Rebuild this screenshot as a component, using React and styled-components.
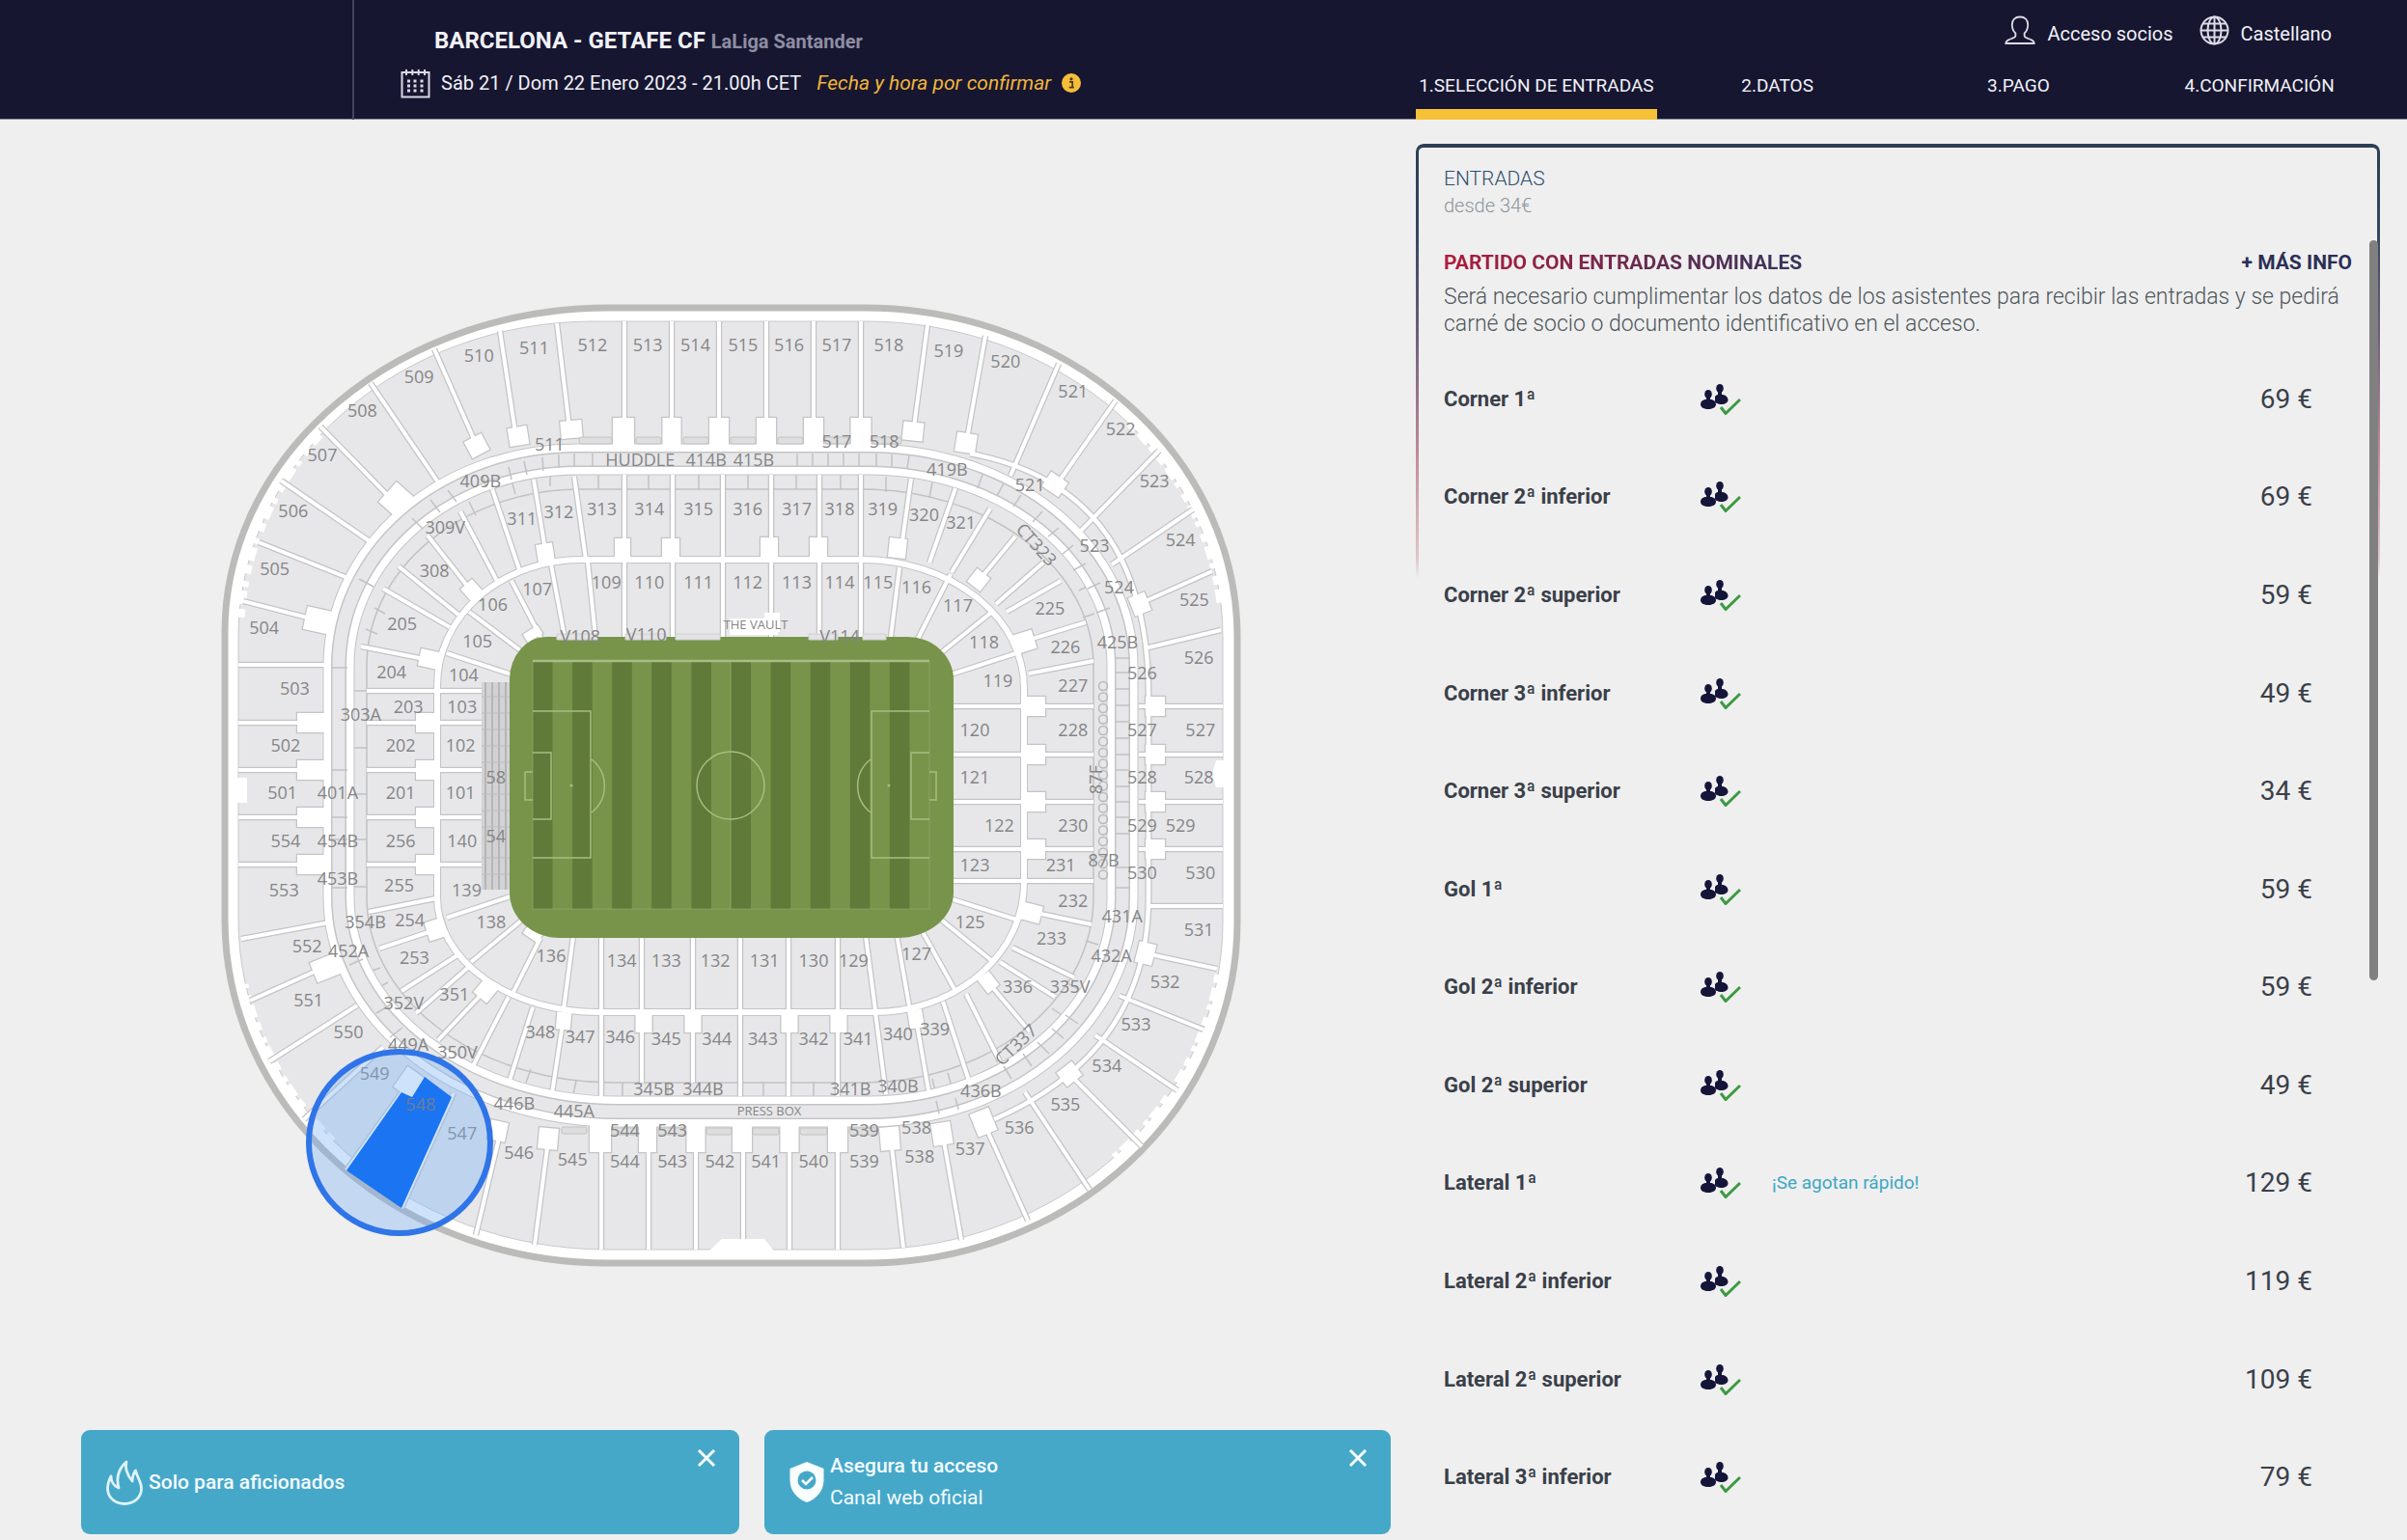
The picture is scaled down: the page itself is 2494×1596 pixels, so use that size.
import React from 'react';
import styled, { createGlobalStyle, css } from 'styled-components';

const GlobalStyle = createGlobalStyle`
  *, *::before, *::after { box-sizing: border-box; }
  body { margin: 0; background: #efefef; }
  button { font: inherit; color: inherit; border: 0; padding: 0; background: none; cursor: pointer; }
  a { color: inherit; text-decoration: none; }
  h1, h2, p, ul, ol { margin: 0; padding: 0; font-weight: inherit; }
  ul, ol { list-style: none; }
`;

const columns = css`
  display: grid;
  grid-template-columns: minmax(0, 1467fr) minmax(0, 1027fr);
`;

const Page = styled.div`
  height: 100vh;
  display: flex;
  flex-direction: column;
  overflow: hidden;
  font-family: Roboto, "Liberation Sans", sans-serif;
  font-size: 20px;
  line-height: 24px;
  color: #3a4049;
`;

const Header = styled.header`
  ${columns}
  flex: none;
  color: #f1f1f6;
  background: #161631;
  box-shadow: inset 0 -1px #8b8b99;
`;

const MatchSide = styled.div`
  display: flex;
`;

const BrandSlot = styled.div`
  width: 367px;
  border-right: 2px solid #43435e;
`;

const Match = styled.div`
  display: flex;
  flex-direction: column;
  gap: 13px;
  padding: 27px 0 0 48px;
`;

const MatchTitle = styled.h1`
  padding-left: 35px;
  font-size: 24px;
  line-height: 30px;
  font-weight: 700;
`;

const League = styled.span`
  font-size: 20px;
  color: #8e8ea1;
`;

const MatchDate = styled.div`
  display: flex;
  align-items: center;
  height: 30px;
  gap: 11px;
`;

const Pending = styled.em`
  margin-left: 5px;
  font-size: 21px;
  color: #f2b53a;
`;

const HeaderSide = styled.div`
  display: flex;
  flex-direction: column;
  gap: 30px;
  padding-top: 17px;
`;

const UserMenu = styled.div`
  display: flex;
  justify-content: flex-end;
  align-items: flex-end;
  gap: 27px;
  height: 30px;
  padding-right: 78px;
`;

const MenuItem = styled.button`
  display: flex;
  align-items: flex-end;
  gap: 12px;
`;

const Steps = styled.ol`
  display: grid;
  grid-template-columns: repeat(4, 1fr);
  padding-right: 28px;
`;

const Step = styled.a`
  display: block;
  padding-bottom: 12px;
  font-size: 19px;
  text-align: center;
  white-space: nowrap;
  border-bottom: 11px solid ${(p) => (p['aria-current'] ? '#f7c137' : 'transparent')};
`;

const Main = styled.main`
  ${columns}
  flex: 1;
  min-height: 0;
`;

const MapSide = styled.section`
  display: flex;
  flex-direction: column;
  min-height: 0;
  padding-bottom: 6px;
`;

const Plan = styled.svg`
  display: block;
  flex: 1;
  min-height: 0;
  width: 100%;
`;

const Notices = styled.div`
  display: grid;
  grid-template-columns: 682fr 649fr;
  gap: 26px;
  padding: 0 26px 0 84px;
`;

const Notice = styled.div`
  display: flex;
  align-items: center;
  height: 108px;
  padding: 0 24px 0 26px;
  gap: 6px;
  font-size: 21px;
  color: #f4fbff;
  background: #46a8c9;
  border-radius: 9px;
`;

const NoticeText = styled.div`
  flex: 1;
  line-height: 33px;
`;

const NoticeTitle = styled.p`
  font-weight: 500;
`;

const Close = styled.button`
  align-self: flex-start;
  display: flex;
  margin-top: 19px;
`;

const TicketSide = styled.section`
  display: flex;
  min-height: 0;
  padding: 25px 28px 14px 0;
`;

const Card = styled.div`
  position: relative;
  flex: 1;
  display: flex;
  flex-direction: column;
  padding: 22px 29px 0 29px;

  &::before {
    content: "";
    position: absolute;
    inset: 0 0 auto 0;
    height: 450px;
    padding: 4px 3px 0 3px;
    border-radius: 8px 8px 0 0;
    background: linear-gradient(#2d3e55 0, #34465f 90px, #6f5f7c 200px, #c08a97 320px, rgba(205, 160, 165, 0.5) 430px, transparent);
    mask: linear-gradient(#000 0 0) content-box exclude, linear-gradient(#000 0 0);
    pointer-events: none;
  }
`;

const Scrollbar = styled.div`
  position: absolute;
  top: 100px;
  right: 2px;
  width: 9px;
  height: 767px;
  border-radius: 5px;
  background: #808080;
`;

const CardTitle = styled.h2`
  font-size: 21px;
  line-height: 28px;
  font-weight: 300;
  color: #2f4d6e;
`;

const From = styled.p`
  line-height: 28px;
  font-weight: 300;
  color: #8d959b;
`;

const NominalHead = styled.div`
  display: flex;
  justify-content: space-between;
  align-items: center;
  margin-top: 31px;
  font-size: 21px;
  line-height: 28px;
  font-weight: 700;
`;

const NominalTitle = styled.span`
  color: transparent;
  background: linear-gradient(90deg, #b01c3d, #34345c);
  background-clip: text;
`;

const More = styled.button`
  color: #2c2f55;
`;

const Explain = styled.p`
  margin-top: 8px;
  font-size: 23px;
  line-height: 28px;
  font-weight: 300;
  color: #50575c;
`;

const Zones = styled.ul`
  flex: 1;
  min-height: 0;
  display: grid;
  grid-auto-rows: 1fr;
  margin-top: 13px;
  padding-right: 41px;
`;

const Zone = styled.button`
  display: grid;
  grid-template-columns: 266px 74px 1fr auto;
  align-items: center;
  width: 100%;
  height: 100%;
  text-align: left;
`;

const ZoneName = styled.span`
  font-size: 22px;
  font-weight: 700;
`;

const Alert = styled.span`
  font-size: 19px;
  color: #3da7c3;
`;

const Price = styled.span`
  font-size: 28px;
  line-height: 32px;
`;

/* ---------- icons ---------- */

const CalendarIcon = () => (
  <svg width="31" height="31" viewBox="0 0 31 31" fill="none" stroke="#d9d9e6" strokeWidth="2" aria-hidden="true">
    <rect x="1.5" y="4" width="28" height="25.5" />
    <path d="M6 1v6M12.300 1v6M18.700 1v6M25 1v6" />
    <g fill="#d9d9e6" stroke="none">
      {[13, 18, 23].map((y) => [7, 13.5, 20.500].map((x) => <rect key={`${x}-${y}`} x={x} y={y - 1.500} width="3" height="3" />))}
    </g>
  </svg>
);

const InfoIcon = () => (
  <svg width="20" height="20" viewBox="0 0 20 20" aria-hidden="true">
    <circle cx="10" cy="10" r="10" fill="#f5bd38" />
    <circle cx="10" cy="5.800" r="1.600" fill="#4a3a20" />
    <path d="M8 8.800h3.200v5.200M7.800 14.600h5" stroke="#4a3a20" strokeWidth="1.800" fill="none" />
  </svg>
);

const UserIcon = () => (
  <svg width="32" height="31" viewBox="0 0 32 31" fill="none" stroke="#dcdce8" strokeWidth="1.800" strokeLinejoin="round" aria-hidden="true">
    <path d="M16 1.500c5 0 8.200 3 8.200 8 0 4.500-1.400 7-3.600 9v2.500c0 1.500 1 1.900 3.200 2.700 4 1.400 6.700 2.300 7 5.300H1.200c.3-3 3-3.900 7-5.300 2.200-.8 3.200-1.200 3.200-2.700v-2.500c-2.200-2-3.600-4.500-3.600-9 0-5 3.200-8 8.200-8z" />
  </svg>
);

const GlobeIcon = () => (
  <svg width="31" height="31" viewBox="0 0 31 31" fill="none" stroke="#dcdce8" strokeWidth="2" aria-hidden="true">
    <circle cx="15.500" cy="15.500" r="14" />
    <ellipse cx="15.500" cy="15.500" rx="7" ry="14" />
    <path d="M15.500 1.500v28M1.500 15.500h28M4 8.500h23M4 22.500h23" />
  </svg>
);

const PeopleIcon = () => (
  <svg width="42" height="32" viewBox="0 0 42 32" aria-hidden="true">
    <g fill="#15153a">
      <ellipse cx="20" cy="4.500" rx="3.800" ry="4.500" />
      <path d="M18 8h4v3c4 0 6.500 2.500 6.500 5.500 0 2.500-3 4.500-7 4.500-3 0-5.500-1-6.500-2.500V13c.8-1.300 2-2 3-2z" />
      <ellipse cx="8" cy="10.500" rx="3.800" ry="4.500" />
      <path d="M6 14h4v2c4 0 6 2.500 6 5s-2.500 5-8 5-8-2.500-8-5 2-5 6-5z" />
    </g>
    <path d="M21 24l5 6.500L41 16" fill="none" stroke="#3c9a41" strokeWidth="3" />
  </svg>
);

const FlameIcon = () => (
  <svg width="38" height="47" viewBox="0 0 38 47" fill="none" stroke="#dff3fa" strokeWidth="2.800" strokeLinejoin="round" aria-hidden="true">
    <path d="M21 2C13 9 10 18 13 29 8 27 5 22 5 17c-2 4-3.500 8-3.500 12.500C1.500 39 9 45.500 19 45.500S36.500 39 36.500 29.500C36.500 23 32 18 30.500 11c-2 2-3 6-3.500 11-4-5-8-12-6-20z" />
  </svg>
);

const ShieldIcon = () => (
  <svg width="36" height="42" viewBox="0 0 36 42" aria-hidden="true">
    <path d="M18 0l17.500 7v12c0 11-7.500 19.500-17.500 23C8 38.500.5 30 .5 19V7z" fill="#f9feff" />
    <circle cx="18" cy="19" r="9.500" fill="#46a8c9" />
    <path d="M13 19l4 4 7-7" fill="none" stroke="#f9feff" strokeWidth="2.500" />
  </svg>
);

const CloseIcon = () => (
  <svg width="20" height="20" viewBox="0 0 20 20" stroke="#f9feff" strokeWidth="3" aria-hidden="true">
    <path d="M2 2l16 16M18 2L2 18" />
  </svg>
);

/* ---------- stadium plan ---------- */

/* Closed ring: outer bounds plus the centre of each corner's ellipse. */
const ring = (l, t, r, b, tl, tr, br, bl) =>
  `M${tl[0]} ${t}H${tr[0]}A${r - tr[0]} ${tr[1] - t} 0 0 1 ${r} ${tr[1]}V${br[1]}` +
  `A${r - br[0]} ${b - br[1]} 0 0 1 ${br[0]} ${b}H${bl[0]}A${bl[0] - l} ${b - bl[1]} 0 0 1 ${l} ${bl[1]}` +
  `V${tl[1]}A${tl[0] - l} ${tl[1] - t} 0 0 1 ${tl[0]} ${t}Z`;

const RINGS = {
  wall: ring(233, 319, 1282, 1309, [631, 655], [895, 660], [897, 955], [629, 953]),
  stands: ring(247, 333, 1267, 1295, [615, 660], [897, 660], [897, 955], [629, 953]),
  upper: ring(351, 476, 1163, 1152, [598, 690], [900, 690], [900, 930], [640, 930]),
  boxes: ring(380, 507, 1133, 1122, [602, 690], [893, 690], [895, 930], [635, 930]),
  lower: ring(453, 580, 1061, 1049, [602, 710], [893, 713], [905, 915], [620, 930]),
  pitch: ring(528, 660, 988, 972, [566, 704], [940, 704], [930, 925], [580, 925]),
};

const UPPER_RIGHT_LANE = 'M1005 470Q1190 505 1190 720V930Q1190 1090 1030 1160';

const AISLES = [
  [647, 333, 647, 452], [696, 333, 696, 452], [745, 333, 745, 452], [794, 333, 794, 452], [843, 333, 843, 452], [892, 333, 892, 452],
  [577, 335, 591, 452], [518, 343, 535, 455], [450, 362, 494, 462], [384, 397, 454, 500], [332, 442, 410, 522], [291, 498, 386, 563],
  [268, 562, 363, 600], [252, 623, 330, 643], [247, 689, 341, 689], [247, 749, 341, 749], [247, 798, 341, 798], [247, 847, 341, 847],
  [247, 896, 341, 896], [250, 973, 341, 956], [259, 1037, 330, 1005], [279, 1100, 370, 1042], [315, 1160, 397, 1085], [359, 1213, 418, 1130],
  [416, 1252, 470, 1133], [493, 1280, 518, 1175], [554, 1290, 568, 1182], [623, 1295, 623, 1180], [672, 1295, 672, 1180],
  [721, 1295, 721, 1180], [770, 1295, 770, 1180], [818, 1295, 818, 1180], [868, 1295, 868, 1180], [936, 1293, 923, 1180],
  [996, 1285, 977, 1177], [1065, 1265, 1020, 1165], [1129, 1233, 1062, 1132], [1183, 1188, 1108, 1113], [1220, 1130, 1135, 1073],
  [1247, 1067, 1160, 1032], [1261, 1004, 1187, 988], [1267, 939, 1190, 939], [1267, 880, 1180, 880], [1267, 831, 1180, 831],
  [1267, 782, 1180, 782], [1267, 732, 1180, 732], [1265, 653, 1186, 672], [1256, 592, 1180, 626], [1236, 528, 1152, 585],
  [1201, 467, 1120, 550], [1156, 415, 1093, 505], [1097, 377, 1047, 493], [1021, 348, 1001, 460], [961, 337, 946, 450],
  [647, 492, 647, 660], [697, 492, 697, 660], [749, 492, 749, 660], [799, 492, 799, 660], [849, 492, 849, 660], [892, 492, 892, 660],
  [595, 494, 607, 580], [553, 497, 566, 576], [510, 507, 538, 590], [477, 530, 515, 602], [443, 555, 488, 612], [413, 587, 475, 637],
  [397, 610, 466, 650], [374, 670, 445, 684], [380, 716, 450, 716], [380, 749, 450, 749], [380, 798, 450, 798], [380, 847, 450, 847],
  [380, 896, 450, 896], [382, 945, 452, 931], [393, 983, 450, 964], [416, 1027, 474, 990], [431, 1050, 488, 1000], [454, 1078, 502, 1027],
  [490, 1105, 527, 1033], [527, 1123, 552, 1044], [572, 1133, 584, 1054], [623, 1136, 623, 972], [767, 1136, 767, 972],
  [817, 1136, 817, 972], [868, 1136, 868, 972], [665, 1122, 665, 972], [718, 1122, 718, 972], [907, 1049, 918, 1134], [949, 1055, 962, 1130],
  [977, 1038, 1004, 1120], [1001, 1030, 1036, 1100], [1024, 1018, 1067, 1069], [1036, 997, 1093, 1033], [1049, 982, 1113, 1013],
  [1069, 945, 1131, 958], [1061, 913, 1133, 913], [1061, 880, 1133, 880], [1061, 831, 1133, 831], [1061, 782, 1133, 782],
  [1061, 732, 1133, 732], [1066, 698, 1133, 685], [1063, 664, 1125, 645], [1043, 634, 1099, 602], [1032, 626, 1081, 583],
  [1014, 602, 1052, 556], [986, 593, 1026, 527], [963, 583, 990, 506], [933, 575, 944, 496],
  [932, 588, 923, 660], [985, 595, 951, 662], [1028, 634, 972, 679], [1053, 677, 985, 699], [988, 732, 1060, 732], [988, 782, 1060, 782],
  [988, 831, 1060, 831], [988, 880, 1060, 880], [988, 913, 1060, 913], [1053, 953, 984, 931], [1028, 996, 970, 949], [990, 1027, 955, 964],
  [942, 1042, 929, 968], [907, 1047, 897, 970], [594, 970, 584, 1046], [560, 972, 531, 1030], [545, 950, 488, 997], [532, 928, 463, 951],
  [453, 896, 499, 896], [453, 847, 499, 847], [453, 798, 499, 798], [453, 749, 499, 749], [453, 716, 499, 716],
  [530, 699, 463, 677], [547, 680, 486, 634], [561, 662, 530, 602], [585, 660, 571, 585], [617, 660, 609, 582],
];

/* Stair openings: centre x, centre y, width, height, rotation. */
const DOORS = [
  [646, 447, 22, 28, 0], [696, 447, 19, 28, 0], [745, 447, 20, 28, 0], [794, 447, 20, 28, 0], [843, 447, 20, 28, 0], [892, 447, 21, 28, 0],
  [592, 445, 22, 18, -5], [537, 452, 20, 19, -9], [494, 462, 20, 19, -28], [412, 519, 28, 28, 42], [330, 643, 28, 24, 12],
  [325, 749, 34, 20, 0], [325, 798, 34, 20, 0], [325, 847, 34, 20, 0], [325, 896, 34, 20, 0], [338, 1003, 28, 22, -22], [424, 1122, 22, 26, 35],
  [516, 1172, 18, 20, 12], [568, 1180, 20, 22, 5], [622, 1180, 22, 28, 0], [671, 1180, 18, 28, 0], [721, 1180, 19, 28, 0],
  [769, 1180, 20, 28, 0], [818, 1180, 19, 28, 0], [868, 1180, 20, 28, 0], [922, 1180, 20, 24, -5], [976, 1175, 20, 23, -9],
  [1019, 1163, 21, 25, -22], [1108, 1113, 20, 18, -38], [1187, 988, 18, 22, 14], [1197, 880, 20, 20, 0], [1197, 831, 20, 20, 0],
  [1197, 782, 20, 20, 0], [1197, 732, 20, 20, 0], [1181, 626, 18, 20, -22], [1093, 502, 21, 18, 34], [1001, 459, 21, 20, 9], [946, 447, 21, 19, 6],
  [645, 568, 16, 20, 0], [695, 568, 18, 20, 0], [797, 567, 18, 20, 0], [848, 567, 18, 20, 0], [565, 573, 17, 19, -9], [489, 612, 16, 18, -42],
  [445, 683, 21, 18, 12], [441, 749, 20, 20, 0], [441, 798, 20, 20, 0], [441, 847, 20, 20, 0], [441, 896, 20, 20, 0], [452, 963, 20, 20, -18],
  [503, 1027, 18, 18, 40], [584, 1058, 15, 18, 5], [667, 1060, 17, 20, 0], [718, 1060, 17, 20, 0], [818, 1060, 17, 20, 0], [869, 1060, 17, 20, 0],
  [949, 1056, 15, 19, -9], [1024, 1018, 15, 18, -38], [1069, 946, 20, 18, 14], [1073, 880, 20, 20, 0], [1073, 831, 20, 20, 0],
  [1073, 782, 20, 20, 0], [1073, 732, 20, 20, 0], [1062, 665, 20, 20, -18], [1014, 601, 17, 17, 38], [930, 568, 18, 20, 6],
  [552, 657, 18, 10, -32], [552, 968, 18, 10, 34],
];

/* Narrow seat rows beside the concourse: x, y, width. */
const ROWS = [
  [600, 453, 34], [659, 453, 26], [708, 453, 26], [757, 453, 26], [806, 453, 26], [855, 453, 26], [904, 453, 30],
  [634, 1169, 26], [682, 1169, 28], [732, 1169, 26], [780, 1169, 27], [829, 1169, 28], [880, 1169, 30],
  [582, 1168, 26],
];

/* Block labels sit on a 1568-unit wide chart: text, x, y, rotation. */
const UNIT = 2494 / 1568;
const LABELS = [
  ['510', 312, 232], ['511', 348, 227], ['512', 386, 225], ['513', 422, 225], ['514', 453, 225], ['515', 484, 225], ['516', 514, 225],
  ['517', 545, 225], ['518', 579, 225], ['519', 618, 229], ['520', 655, 236], ['521', 699, 255], ['522', 730, 280], ['523', 752, 314],
  ['524', 769, 352], ['525', 778, 391], ['526', 781, 429], ['527', 782, 476], ['528', 781, 507], ['529', 769, 538], ['530', 782, 569],
  ['531', 781, 606], ['532', 759, 640], ['533', 740, 668], ['534', 721, 695], ['535', 694, 720], ['536', 664, 735], ['537', 632, 749],
  ['538', 599, 754], ['539', 563, 757], ['540', 530, 757], ['541', 499, 757], ['542', 469, 757], ['543', 438, 757], ['544', 407, 757],
  ['545', 373, 756], ['546', 338, 751], ['547', 301, 739], ['549', 244, 700], ['550', 227, 673], ['551', 201, 652], ['552', 200, 617],
  ['553', 185, 580], ['554', 186, 548], ['501', 184, 517], ['502', 186, 486], ['503', 192, 449], ['504', 172, 409], ['505', 179, 371],
  ['506', 191, 333], ['507', 210, 297], ['508', 236, 268], ['509', 273, 246],
  ['511', 358, 290], ['517', 545, 288], ['518', 576, 288], ['521', 671, 316], ['523', 713, 356], ['524', 729, 383], ['526', 744, 439],
  ['527', 744, 476], ['528', 744, 507], ['529', 744, 538], ['530', 744, 569], ['538', 597, 735], ['539', 563, 737], ['543', 438, 737], ['544', 407, 737],
  ['HUDDLE', 417, 300], ['414B', 460, 300], ['415B', 491, 300], ['419B', 617, 306], ['409B', 313, 314], ['309V', 290, 344],
  ['425B', 728, 419], ['431A', 731, 597], ['432A', 724, 623], ['436B', 639, 711], ['446B', 335, 719], ['445A', 374, 724],
  ['449A', 266, 681], ['350V', 298, 686], ['352V', 263, 654], ['452A', 227, 620], ['354B', 238, 601], ['453B', 220, 573], ['454B', 220, 548],
  ['401A', 220, 517], ['303A', 235, 466], ['340B', 585, 708], ['341B', 554, 710], ['344B', 458, 710], ['345B', 426, 710], ['335V', 697, 643],
  ['87B', 719, 561],
  ['311', 340, 338], ['312', 364, 334], ['313', 392, 332], ['314', 423, 332], ['315', 455, 332], ['316', 487, 332], ['317', 519, 332],
  ['318', 547, 332], ['319', 575, 332], ['320', 602, 336], ['321', 626, 341], ['308', 283, 372],
  ['109', 395, 380], ['110', 423, 380], ['111', 455, 380], ['112', 487, 380], ['113', 519, 380], ['114', 547, 380], ['115', 572, 380],
  ['116', 597, 383], ['117', 624, 395], ['118', 641, 419], ['119', 650, 444], ['120', 635, 476], ['121', 635, 507], ['122', 651, 538],
  ['123', 635, 564], ['125', 632, 601], ['127', 597, 622], ['129', 556, 626], ['130', 530, 626], ['131', 498, 626], ['132', 466, 626],
  ['133', 434, 626], ['134', 405, 626], ['136', 359, 623], ['138', 320, 601], ['139', 304, 580], ['140', 301, 548], ['101', 300, 517],
  ['102', 300, 486], ['103', 301, 461], ['104', 302, 440], ['105', 311, 418], ['106', 321, 394], ['107', 350, 384],
  ['205', 262, 407], ['204', 255, 438], ['203', 266, 461], ['202', 261, 486], ['201', 261, 517], ['256', 261, 548], ['255', 260, 577],
  ['254', 267, 600], ['253', 270, 624], ['351', 296, 648], ['348', 352, 673], ['347', 378, 676], ['346', 404, 676], ['345', 434, 677],
  ['344', 467, 677], ['343', 497, 677], ['342', 530, 677], ['341', 559, 677], ['340', 585, 674], ['339', 609, 671], ['336', 663, 643],
  ['225', 684, 397], ['226', 694, 422], ['227', 699, 447], ['228', 699, 476], ['230', 699, 538], ['231', 691, 564], ['232', 699, 587], ['233', 685, 612],
  ['58', 323, 507], ['54', 323, 545], ['V108', 378, 415], ['V110', 421, 414], ['V114', 547, 415],
  ['CT323', 675, 355, 48], ['CT337', 662, 681, -44], ['87F', 714, 508, -90],
];

const boxTicks = [
  'M620 492v15M672 492v15M724 492v15M775 492v15M825 492v15M871 492v15M918 494v16M966 500l-3 16',
  'M367 716h13M367 775h13M367 823h13M367 870h13M367 919h13M388 630l11 6M379 652l12 5',
  'M645 1122v14M692 1122v14M741 1122v14M791 1122v14M843 1122v14M597 1120l-3 14M550 1108l-5 14',
  'M394 1003l-11 4M402 1018l-11 6M1118 612l12 -6M1122 640l12 -4M966 1118l3 13M982 1112l4 14',
  'M1090 1045l10 7M1108 1020l11 6M1125 975l13 4M570 490v14M530 498l4 14M486 520l7 14',
].join('');

const concourseTicks = [
  'M826 470v13M842 470v13M858 470v13M874 470v13M890 470v13M908 470v13M924 471v13M942 472l-2 13',
  'M1018 492l-5 14M1040 501l-7 13M1058 513l-8 12M1080 530l-10 11M1097 547l-11 9M1112 565l-11 9M1125 584l-13 7M1140 604l-13 6M1150 630l-14 5',
  'M1156 682h15M1156 697h15M1156 714h15M1156 731h15M1156 748h15M1156 765h15M1156 782h15M1156 798h15M1156 815h15M1156 831h15M1156 847h15M1156 864h15M1156 899h15M1156 920h15',
  'M1104 1052l13 9M1090 1066l12 10M1075 1080l12 12M1060 1092l9 13M1040 1105l8 13M990 1138l3 12M970 1141l3 13',
  'M527 484l3 13M543 478l3 14M562 474l1 14M579 471v14M595 470v14M614 470v14M500 493l4 12M464 508l9 12M446 518l10 13M427 537l11 11M372 600l15 8',
  'M343 692h17M343 798h17M343 847h17M343 870h17M343 920h17M362 1000l14 -6M390 1050l15 -9M404 1075l13 -10',
].join('');

const Aisles = () => AISLES.map(([a, b, c, d], i) => <line key={i} x1={a} y1={b} x2={c} y2={d} />);

const Doors = () => DOORS.map(([x, y, w, h, r], i) => (
  <rect key={i} x={x - w / 2} y={y - h / 2} width={w} height={h} transform={`rotate(${r} ${x} ${y})`} />
));

const StadiumPlan = () => (
  <Plan viewBox="0 124 1467 1358" role="img" aria-label="Plano del estadio" fontFamily='"Open Sans", "Noto Sans", sans-serif'>
    <path d={RINGS.wall} fill="#fff" stroke="#bbbbba" strokeWidth="7" />
    <path d={RINGS.stands} fill="#e7e7e9" stroke="#c9c9cb" />
    <g fill="none" stroke="#fff" strokeWidth="7" strokeDasharray="9 5 14 4 6 8">
      <path d="M250 640A368 327 0 0 1 332 451" />
      <path d="M1170 439A370 327 0 0 1 1264 625" />
      <path d="M1262 1010A370 340 0 0 1 1150 1203" />
      <path d="M345 1182A382 342 0 0 1 254 1020" />
    </g>
    <path d={RINGS.boxes} fill="none" stroke="#c2c2c4" strokeWidth="1.500" />
    <path d={boxTicks} stroke="#c2c2c4" strokeWidth="1.500" />

    {/* grey edges of every walkway, then their white surfaces, so that junctions stay open */}
    <g fill="none" stroke="#c4c4c6">
      <path d={UPPER_RIGHT_LANE} strokeWidth="7" />
      <path d={RINGS.upper} strokeWidth="33" />
      <path d={RINGS.lower} strokeWidth="8" />
      <g strokeWidth="6.500"><Aisles /></g>
      <g strokeWidth="2.500"><Doors /></g>
    </g>
    <g fill="none" stroke="#fff">
      <path d={UPPER_RIGHT_LANE} strokeWidth="4.500" />
      <path d={RINGS.upper} strokeWidth="31" />
      <path d={RINGS.lower} strokeWidth="6" />
      <g strokeWidth="4"><Aisles /></g>
    </g>
    <g fill="#fff"><Doors /></g>
    <g fill="none">
      <path d={RINGS.upper} stroke="#c4c4c6" strokeWidth="16" />
      <path d={RINGS.upper} stroke="#e7e7e9" strokeWidth="13" />
      <path d={concourseTicks} stroke="#c2c2c4" strokeWidth="1.500" />
    </g>

    <g fill="#dededf" stroke="#c2c2c4">
      {ROWS.map(([x, y, w]) => <rect key={`${x}-${y}`} x={x} y={y} width={w} height="7" rx="2" />)}
    </g>
    <g fill="#fff">
      <path d="M733 1298L748 1284H792L803 1298Z" />
      <path d="M244 806h12v26h-12z" />
      <path d="M1270 788h-10l-4 14 4 14h10z" />
    </g>

    <g>
      <rect x="499" y="707" width="29" height="215" fill="#d2d2d4" />
      <path d="M503 707v215M510 707v215M517 707v215M524 707v215" stroke="#b6b6b8" strokeWidth="2" />
      <path d="M499 722h29M499 739h29M499 756h29M499 773h29M499 790h29M499 823h29M499 840h29M499 857h29M499 889h29M499 906h29" stroke="#bcbcbe" />
    </g>
    <g fill="none" stroke="#b9b9bb" strokeWidth="1.500">
      {Array.from({ length: 18 }, (_, i) => <circle key={i} cx="1143" cy={711 + i * 11.5} r="4.500" />)}
    </g>

    <path d={RINGS.pitch} fill="#77944a" />
    {Array.from({ length: 10 }, (_, i) => (
      <rect key={i} x={552 + i * 41.1} y="686" width="20.500" height="256" fill="#5f7a39" />
    ))}
    <g fill="none" stroke="#a7bd83" strokeWidth="1.500">
      <path d="M552 685H963" strokeWidth="2.500" />
      <path d="M552 685V942H963V685M757 685V942" strokeOpacity=".3" />
      <circle cx="757" cy="814" r="35" />
      <path d="M552 737H612V889H552M552 780H571V849H552M552 800H544V829H552M613 787A35 35 0 0 1 613 842" />
      <path d="M963 737H903V889H963M963 780H944V849H963M963 800H970V829H963M902 787A35 35 0 0 0 902 842" />
    </g>
    <g fill="#a7bd83">
      <circle cx="592" cy="814" r="1.500" />
      <circle cx="921" cy="814" r="1.500" />
    </g>
    <g fill="#e3e3e6" stroke="#cfcfd2">
      <path d="M577 657h42v6h-42zM648 657h42v6h-42zM700 657h46v6h-46zM838 657h30v6h-30zM894 657h24v6h-24z" />
    </g>
    <path d="M756 641h36v-6h16v20h-2v3h-50z" fill="#fff" />

    <g fontSize="18" textAnchor="middle" fill="#858587">
      {LABELS.map(([t, x, y, r], i) => (
        <text key={i} x={x * UNIT} y={y * UNIT + 6} transform={r ? `rotate(${r} ${x * UNIT} ${y * UNIT})` : undefined}>{t}</text>
      ))}
    </g>
    <g fontSize="13" textAnchor="middle" fill="#858587">
      <text x="783" y="652">THE VAULT</text>
      <text x="797" y="1156">PRESS BOX</text>
    </g>

    <circle cx="414" cy="1184" r="94" fill="#78b2f5" fillOpacity=".36" />
    <path d="M440 1116L468 1137L416 1252L359 1213L416 1132L427 1137Z" fill="#1b74f2" />
    <text x={274 * UNIT} y="1151" fontSize="18" textAnchor="middle" fill="#6c7c98">548</text>
    <circle cx="414" cy="1184" r="94" fill="none" stroke="#2f74e8" strokeWidth="6" />
  </Plan>
);

const STEPS = ['1.SELECCIÓN DE ENTRADAS', '2.DATOS', '3.PAGO', '4.CONFIRMACIÓN'];

const ZONES = [
  ['Corner 1ª', '69 €'],
  ['Corner 2ª inferior', '69 €'],
  ['Corner 2ª superior', '59 €'],
  ['Corner 3ª inferior', '49 €'],
  ['Corner 3ª superior', '34 €'],
  ['Gol 1ª', '59 €'],
  ['Gol 2ª inferior', '59 €'],
  ['Gol 2ª superior', '49 €'],
  ['Lateral 1ª', '129 €', '¡Se agotan rápido!'],
  ['Lateral 2ª inferior', '119 €'],
  ['Lateral 2ª superior', '109 €'],
  ['Lateral 3ª inferior', '79 €'],
];

export default function App() {
  return (
    <Page>
      <GlobalStyle />
      <Header>
        <MatchSide>
          <BrandSlot />
          <Match>
            <MatchTitle>BARCELONA - GETAFE CF <League>LaLiga Santander</League></MatchTitle>
            <MatchDate>
              <CalendarIcon />
              <span>Sáb 21 / Dom 22 Enero 2023 - 21.00h CET</span>
              <Pending>Fecha y hora por confirmar</Pending>
              <InfoIcon />
            </MatchDate>
          </Match>
        </MatchSide>
        <HeaderSide>
          <UserMenu>
            <MenuItem type="button"><UserIcon />Acceso socios</MenuItem>
            <MenuItem type="button"><GlobeIcon />Castellano</MenuItem>
          </UserMenu>
          <nav>
            <Steps>
              {STEPS.map((s, i) => (
                <li key={s}><Step href="#" aria-current={i === 0 ? 'step' : undefined}>{s}</Step></li>
              ))}
            </Steps>
          </nav>
        </HeaderSide>
      </Header>

      <Main>
        <MapSide>
          <StadiumPlan />
          <Notices>
            <Notice>
              <FlameIcon />
              <NoticeText><NoticeTitle>Solo para aficionados</NoticeTitle></NoticeText>
              <Close type="button" aria-label="Cerrar"><CloseIcon /></Close>
            </Notice>
            <Notice>
              <ShieldIcon />
              <NoticeText>
                <NoticeTitle>Asegura tu acceso</NoticeTitle>
                <p>Canal web oficial</p>
              </NoticeText>
              <Close type="button" aria-label="Cerrar"><CloseIcon /></Close>
            </Notice>
          </Notices>
        </MapSide>

        <TicketSide>
          <Card>
            <CardTitle>ENTRADAS</CardTitle>
            <From>desde 34€</From>
            <NominalHead>
              <NominalTitle>PARTIDO CON ENTRADAS NOMINALES</NominalTitle>
              <More type="button">+ MÁS INFO</More>
            </NominalHead>
            <Explain>
              Será necesario cumplimentar los datos de los asistentes para recibir las entradas y se pedirá carné de socio o documento identificativo en el acceso.
            </Explain>
            <Zones>
              {ZONES.map(([name, price, alert]) => (
                <li key={name}>
                  <Zone type="button">
                    <ZoneName>{name}</ZoneName>
                    <PeopleIcon />
                    <Alert>{alert}</Alert>
                    <Price>{price}</Price>
                  </Zone>
                </li>
              ))}
            </Zones>
            <Scrollbar />
          </Card>
        </TicketSide>
      </Main>
    </Page>
  );
}
